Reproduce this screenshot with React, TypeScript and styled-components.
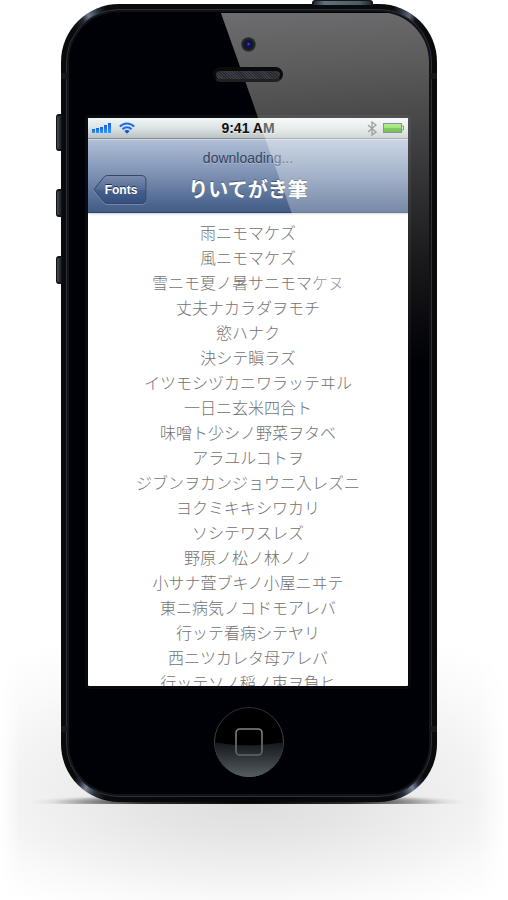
import React from "react";
import styled, { createGlobalStyle } from "styled-components";

const GlobalStyle = createGlobalStyle`
  *, *::before, *::after { box-sizing: border-box; }
  body {
    margin: 0;
    background: #fff;
    font-family: "Liberation Sans", "Noto Sans CJK JP", sans-serif;
  }
`;

const Page = styled.main`
  position: relative;
  display: flex;
  justify-content: center;
  padding: 4px 10px 98px 0;
  overflow: hidden;
`;

const floorStops = "#dedede 0%, #e5e5e5 30%, #eeeeee 55%, #f3f3f3 70%, #f9f9f9 85%, #ffffff 110%";

const Floor = styled.div`
  position: absolute;
  left: 0;
  right: 0;
  bottom: 0;
  height: 300px;
  background:
    radial-gradient(ellipse 66% 85% at 49% 100%, ${floorStops}) 0 0 / 100% 202px no-repeat,
    radial-gradient(ellipse 66% 115% at 49% 0%, ${floorStops}) 0 202px / 100% 98px no-repeat;
  mask-image: linear-gradient(90deg, transparent 0, #000 20px, #000 calc(100% - 30px), transparent 100%);
`;

const ContactShadow = styled.div`
  position: absolute;
  left: 6%;
  right: 8%;
  bottom: 89px;
  height: 18px;
  background: radial-gradient(ellipse 50% 50% at 50% 50%, #000 0%, #000c 50%, #0006 72%, #0001 90%, transparent 100%);
  clip-path: inset(0 0 7px 0);
`;

const Phone = styled.div`
  position: relative;
  width: 100%;
  max-width: 376px;
  padding: 5px;
  border-radius: 58px;
  background: conic-gradient(
    #090b0b 0deg, #090b0b 20deg, #242932 21deg, #5f6675 22.5deg, #12151a 23.5deg, #090b0b 25deg,
    #090b0b 155deg, #252b38 156deg, #7a8293 157deg, #262c39 158.5deg, #090b0b 160deg,
    #050505 180deg,
    #090b0b 200deg, #262c39 201.5deg, #7a8397 203deg, #252b38 204deg, #090b0b 205deg,
    #090b0b 335deg, #20252f 336.5deg, #6e778c 337.5deg, #262b36 339deg, #090b0b 340deg
  );
`;

const Rim = styled.div`
  padding: 2px;
  border: 1px solid #2b3039;
  border-radius: 53px;
  background: #101218;
`;

const Glass = styled.div`
  position: relative;
  border-radius: 50px;
  background: #000106;
  overflow: hidden;
`;

const GlassGlare = styled.div`
  position: absolute;
  top: 1px;
  left: 0;
  right: 0;
  height: 350px;
  clip-path: polygon(42.2% 0, 100% 0, 100% 100%, 76.7% 100%);
  background: linear-gradient(176deg, #707072 0%, #5d5d5e 18%, #4b4b4c 32%, #303032 54%, #1a1a1c 72%, #09090d 90%, #000106 100%);
`;

const SideKey = styled.span<{ $top: number; $height: number }>`
  position: absolute;
  left: -5px;
  top: ${(p) => p.$top}px;
  width: 6px;
  height: ${(p) => p.$height}px;
  border: 1px solid #10131a;
  border-width: 2px 1px;
  border-radius: 3px 0 0 3px;
  background: linear-gradient(90deg, #454c56, #1b2026);
`;

const PowerKey = styled.span`
  position: absolute;
  right: 64px;
  top: -4px;
  width: 61px;
  height: 5px;
  border: 2px solid #14181c;
  border-top-width: 1px;
  border-bottom: 0;
  border-radius: 3px 3px 0 0;
  background: linear-gradient(90deg, #20282d, #61707a 18%, #4d5b64 80%, #20282d);
`;

const Antenna = styled.span<{ $edge: "left" | "right"; $top: number }>`
  position: absolute;
  ${(p) => p.$edge}: 0;
  top: ${(p) => p.$top}px;
  width: 7px;
  height: 6px;
  background: #16181b;
`;

const Forehead = styled.div`
  position: relative;
  display: flex;
  flex-direction: column;
  align-items: center;
  gap: 15px;
  height: 103px;
  padding: 25px 2px 0 0;
`;

const Camera = styled.svg`
  display: block;
  width: 15px;
  height: 15px;
`;

const Speaker = styled.div`
  width: 70px;
  height: 15px;
  border: 3px solid #0b0b0c;
  border-width: 4px 3px 3px;
  border-radius: 8px;
  background: repeating-linear-gradient(45deg, #3c3c44 0 1px, #292930 1px 2px);
  border-bottom-color: #202021;
`;

const Bezel = styled.div`
  position: relative;
  margin: 0 18px 0 16px;
  padding: 3px;
  border-radius: 4px;
  background: linear-gradient(#ffffff0b, #ffffff08);
`;

const Screen = styled.section`
  position: relative;
  display: flex;
  flex-direction: column;
  height: 568px;
  border-radius: 1px;
  background: #fff;
  overflow: hidden;
`;

const ScreenGlare = styled.div`
  position: absolute;
  top: 0;
  left: 0;
  right: 0;
  height: 260px;
  pointer-events: none;
  clip-path: polygon(53.1% 0, 100% 0, 100% 100%, 82% 100%);
  background: linear-gradient(#ffffff5c, #ffffff48 36%, #ffffff44 65%, #ffffff00);
`;

const StatusBar = styled.div`
  display: grid;
  grid-template-columns: 1fr auto 1fr;
  align-items: center;
  flex: none;
  height: 21px;
  padding: 0 4px;
  border-bottom: 1px solid #848b8d;
  background: linear-gradient(#f1f6f6, #dbe3e4 50%, #bbc2c3);
`;

const StatusGroup = styled.div<{ $end?: boolean }>`
  display: flex;
  align-items: center;
  justify-content: ${(p) => (p.$end ? "flex-end" : "flex-start")};
  gap: ${(p) => (p.$end ? 6 : 7)}px;

  svg { display: block; }
`;

const Clock = styled.time`
  color: #111;
  font-size: 14px;
  font-weight: 700;
  line-height: 20px;
  text-shadow: 0 1px 0 #fff8;
`;

const NavBar = styled.header`
  flex: none;
  display: flex;
  flex-direction: column;
  height: 74px;
  padding-top: 8px;
  border-top: 1px solid #ccd7e7;
  border-bottom: 1px solid #2d4470;
  background: linear-gradient(#b0bed6, #8094b5 45%, #4a638c 92%, #425c87);
  box-shadow: 0 1px 2px #0003;
`;

const Prompt = styled.p`
  margin: 0;
  color: #36435d;
  font-size: 14px;
  line-height: 20px;
  text-align: center;
  text-shadow: 0 1px 0 #ffffff40;
`;

const NavRow = styled.div`
  display: grid;
  grid-template-columns: 1fr auto 1fr;
  align-items: center;
  height: 44px;
  padding: 0 5px;
`;

const BackButton = styled.button`
  position: relative;
  justify-self: start;
  width: 54px;
  height: 30px;
  padding: 0 0 0 2px;
  border: 0;
  background: none;
  color: #fff;
  font: 700 12px/30px "Liberation Sans", sans-serif;
  text-shadow: 0 -1px 0 #1d2f50;
  cursor: pointer;

  svg { position: absolute; inset: 0; }
  span { position: relative; }
`;

const Title = styled.h1`
  margin: 0;
  padding-bottom: 2px;
  color: #fff;
  font: 700 20px/28px "Noto Sans CJK JP", sans-serif;
  text-shadow: 0 -1px 0 #0006;
`;

const Poem = styled.div`
  flex: 1;
  min-height: 0;
  padding-top: 7px;
  overflow: hidden;
  color: #727272;
  font-family: "Noto Sans CJK JP", sans-serif;
  font-size: 16px;
  font-weight: 300;
  line-height: 25px;
  text-align: center;
`;

const Verse = styled.p`
  margin: 0;
  white-space: nowrap;
`;

const Chin = styled.div`
  display: flex;
  justify-content: center;
  height: 105px;
  padding-top: 18px;
`;

const HomeButton = styled.button`
  width: 70px;
  height: 70px;
  padding: 0;
  border: 0;
  border-radius: 50%;
  background: none;
  cursor: pointer;

  svg { display: block; }
`;

const verses = [
  "雨ニモマケズ",
  "風ニモマケズ",
  "雪ニモ夏ノ暑サニモマケヌ",
  "丈夫ナカラダヲモチ",
  "慾ハナク",
  "決シテ瞋ラズ",
  "イツモシヅカニワラッテヰル",
  "一日ニ玄米四合ト",
  "味噌ト少シノ野菜ヲタベ",
  "アラユルコトヲ",
  "ジブンヲカンジョウニ入レズニ",
  "ヨクミキキシワカリ",
  "ソシテワスレズ",
  "野原ノ松ノ林ノノ",
  "小サナ萓ブキノ小屋ニヰテ",
  "東ニ病気ノコドモアレバ",
  "行ッテ看病シテヤリ",
  "西ニツカレタ母アレバ",
  "行ッテソノ稲ノ朿ヲ負ヒ",
];

const SignalIcon = () => (
  <svg width="20" height="11" viewBox="0 0 20 11" aria-label="Signal">
    <defs>
      <linearGradient id="signal" x1="0" y1="0" x2="0" y2="1">
        <stop offset="0" stopColor="#1c5fe0" />
        <stop offset="1" stopColor="#2e9bff" />
      </linearGradient>
    </defs>
    {[4, 5, 6, 8, 10].map((h, i) => (
      <rect key={h} x={i * 4} y={10 - h} width="3" height={h} fill="url(#signal)" />
    ))}
  </svg>
);

const WifiIcon = () => (
  <svg width="16" height="12" viewBox="0 0 16 12" fill="none" aria-label="Wi-Fi">
    <g stroke="#1d6be8" strokeWidth="2">
      <path d="M0.8 4.6C4.8 0.3 11.2 0.3 15.2 4.6" />
      <path d="M3.5 7.3C6 4.7 10 4.7 12.5 7.3" />
    </g>
    <path d="M5.3 9C6.9 7.5 9.1 7.5 10.7 9L8 11.8Z" fill="#1453d4" />
  </svg>
);

const BluetoothIcon = () => (
  <svg width="10" height="15" viewBox="0 0 10 15" fill="none" aria-label="Bluetooth">
    <path d="M1 4L9 11L5 14V1L9 4L1 11" stroke="#6c7276" strokeWidth="1.4" />
  </svg>
);

const BatteryIcon = () => (
  <svg width="21" height="11" viewBox="0 0 21 11" aria-label="Battery">
    <defs>
      <linearGradient id="charge" x1="0" y1="0" x2="0" y2="1">
        <stop offset="0" stopColor="#8ae650" />
        <stop offset="0.45" stopColor="#6fda34" />
        <stop offset="0.55" stopColor="#35b008" />
        <stop offset="1" stopColor="#2c9a08" />
      </linearGradient>
    </defs>
    <rect x="0.5" y="0.5" width="18" height="9" fill="url(#charge)" stroke="#50565c" />
    <path d="M19 3H20.5V7H19" fill="#dfe4e5" stroke="#50565c" />
  </svg>
);

const BackShape = () => (
  <svg width="54" height="30" viewBox="0 0 54 30" aria-hidden="true">
    <defs>
      <linearGradient id="back" x1="0" y1="0" x2="0" y2="1">
        <stop offset="0" stopColor="#7c8dae" />
        <stop offset="0.5" stopColor="#526b96" />
        <stop offset="0.52" stopColor="#46608d" />
        <stop offset="1" stopColor="#344f80" />
      </linearGradient>
    </defs>
    <path
      d="M14.5 1.5H48Q53 1.5 53 6V24.5Q53 29.5 48 29.5H14.5Q12 29.5 10.5 27.5L1 15.5L10.5 3.5Q12 1.5 14.5 1.5Z"
      fill="none" stroke="#ffffff38"
    />
    <path
      d="M14.5 0.5H48Q53 0.5 53 5.5V23.5Q53 28.5 48 28.5H14.5Q12 28.5 10.5 26.5L1 14.5L10.5 2.5Q12 0.5 14.5 0.5Z"
      fill="url(#back)" stroke="#374761"
    />
  </svg>
);

const CameraLens = () => (
  <Camera viewBox="0 0 15 15" aria-hidden="true">
    <defs>
      <radialGradient id="lens">
        <stop offset="0" stopColor="#1a1ad0" />
        <stop offset="0.25" stopColor="#12126a" />
        <stop offset="0.55" stopColor="#15171c" />
        <stop offset="1" stopColor="#2f3234" />
      </radialGradient>
    </defs>
    <circle cx="7.5" cy="7.5" r="7.3" fill="url(#lens)" />
    <circle cx="7.5" cy="7" r="1" fill="#3d51d8" />
  </Camera>
);

const HomeFace = () => (
  <svg width="70" height="70" viewBox="0 0 70 70" aria-hidden="true">
    <defs>
      <linearGradient id="gloss" x1="0" y1="0" x2="0" y2="1">
        <stop offset="0" stopColor="#14171b" />
        <stop offset="1" stopColor="#565c60" />
      </linearGradient>
      <linearGradient id="ring" x1="0" y1="0" x2="0" y2="1">
        <stop offset="0" stopColor="#2b2b2e" />
        <stop offset="1" stopColor="#5a6064" />
      </linearGradient>
      <linearGradient id="mark" x1="0" y1="0" x2="0" y2="1">
        <stop offset="0" stopColor="#85858a" />
        <stop offset="1" stopColor="#606467" />
      </linearGradient>
    </defs>
    <circle cx="35" cy="35" r="34.5" fill="#000" stroke="url(#ring)" />
    <path d="M0.6 35.5Q35 41 69.4 35.5A34.4 34.4 0 0 1 0.6 35.5Z" fill="url(#gloss)" />
    <rect x="22" y="22" width="26" height="26" rx="4" fill="none" stroke="url(#mark)" strokeWidth="1.6" />
  </svg>
);

export default function App() {
  return (
    <>
      <GlobalStyle />
      <Page>
        <Floor />
        <ContactShadow />
        <Phone>
          <PowerKey />
          <SideKey $top={110} $height={37} />
          <SideKey $top={185} $height={28} />
          <SideKey $top={252} $height={28} />
          <Rim>
            <Glass>
              <GlassGlare />
              <Forehead>
                <CameraLens />
                <Speaker />
              </Forehead>
              <Bezel>
                <Screen>
                  <StatusBar>
                    <StatusGroup>
                      <SignalIcon />
                      <WifiIcon />
                    </StatusGroup>
                    <Clock>9:41 AM</Clock>
                    <StatusGroup $end>
                      <BluetoothIcon />
                      <BatteryIcon />
                    </StatusGroup>
                  </StatusBar>
                  <NavBar>
                    <Prompt>downloading...</Prompt>
                    <NavRow>
                      <BackButton type="button">
                        <BackShape />
                        <span>Fonts</span>
                      </BackButton>
                      <Title>りいてがき筆</Title>
                    </NavRow>
                  </NavBar>
                  <Poem lang="ja">
                    {verses.map((verse) => (
                      <Verse key={verse}>{verse}</Verse>
                    ))}
                  </Poem>
                  <ScreenGlare />
                </Screen>
              </Bezel>
              <Chin>
                <HomeButton type="button" aria-label="Home">
                  <HomeFace />
                </HomeButton>
              </Chin>
            </Glass>
          </Rim>
          <Antenna $edge="left" $top={69} />
          <Antenna $edge="right" $top={69} />
          <Antenna $edge="left" $top={722} />
          <Antenna $edge="right" $top={722} />
        </Phone>
      </Page>
    </>
  );
}
